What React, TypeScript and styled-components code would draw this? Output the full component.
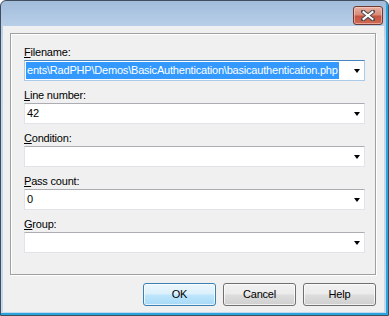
import React from "react";
import styled, { createGlobalStyle } from "styled-components";

type FieldSpec = {
  label: string;
  value?: string;
  focused?: boolean;
};

const fields: FieldSpec[] = [
  {
    label: "Filename:",
    value: "ents\\RadPHP\\Demos\\BasicAuthentication\\basicauthentication.php",
    focused: true,
  },
  { label: "Line number:", value: "42" },
  { label: "Condition:" },
  { label: "Pass count:", value: "0" },
  { label: "Group:" },
];

export default function App() {
  return (
    <>
      <GlobalStyle />
      <Window>
        <TitleBar>
          <CloseButton aria-label="Close">
            <svg width="14" height="11" viewBox="0 0 14 11">
              <path
                d="M2 1.5 L12 9.5 M12 1.5 L2 9.5"
                stroke="#4a4a4a"
                strokeWidth="4"
                strokeLinecap="square"
              />
              <path
                d="M2.5 2 L11.5 9 M11.5 2 L2.5 9"
                stroke="#ffffff"
                strokeWidth="2"
                strokeLinecap="square"
              />
            </svg>
          </CloseButton>
        </TitleBar>
        <Client>
          <GroupBox>
            {fields.map((f) => (
              <Row key={f.label}>
                <Label>
                  <u>{f.label[0]}</u>
                  {f.label.slice(1)}
                </Label>
                <Combo $focused={f.focused}>
                  <ComboText>
                    {f.value && (
                      <Value $selected={f.focused}>{f.value}</Value>
                    )}
                  </ComboText>
                  <Arrow />
                </Combo>
              </Row>
            ))}
          </GroupBox>
          <ButtonBar>
            <Button $default>OK</Button>
            <Button>Cancel</Button>
            <Button>Help</Button>
          </ButtonBar>
        </Client>
      </Window>
    </>
  );
}

const GlobalStyle = createGlobalStyle`
  html, body {
    margin: 0;
    padding: 0;
    background: #ffffff;
  }
  body {
    font-family: "Liberation Sans", Arial, sans-serif;
    font-size: 11px;
    letter-spacing: -0.2px;
    color: #000;
  }
`;

const Window = styled.div`
  box-sizing: border-box;
  width: 389px;
  height: 316px;
  border: 1px solid #3f4d5d;
  border-radius: 6px 6px 0 0;
  background: linear-gradient(to bottom, #a2bcdb 0px, #b8cfe9 25px, #c2d7ee 40px, #c4d8ee 100%);
  box-shadow: inset -2px -2px 0 #2aa5dc;
  display: flex;
  flex-direction: column;
`;

const TitleBar = styled.div`
  height: 25px;
  box-sizing: border-box;
  padding: 5px 5px 0 0;
  display: flex;
  justify-content: flex-end;
  align-items: flex-start;
`;

const CloseButton = styled.div`
  box-sizing: border-box;
  width: 30px;
  height: 19px;
  border: 1px solid #6e3b33;
  border-radius: 3px;
  background: linear-gradient(to bottom, #eab0a3 0%, #d98a78 45%, #c5533f 55%, #cf6b56 100%);
  box-shadow: inset 0 0 0 1px rgba(255, 220, 210, 0.5);
  display: flex;
  align-items: center;
  justify-content: center;
`;

const Client = styled.div`
  flex: 1;
  margin: 0 4px 3px 2px;
  background: #f0f0f0;
  padding: 7px 8px 0 7px;
  display: flex;
  flex-direction: column;
`;

const GroupBox = styled.div`
  box-sizing: border-box;
  height: 242px;
  border: 1px solid #a0a0a0;
  box-shadow: 1px 1px 0 #ffffff, inset 1px 1px 0 #ffffff;
  padding: 12px 10px 0 13px;
  display: flex;
  flex-direction: column;
  gap: 8px;
`;

const Row = styled.div`
  display: flex;
  flex-direction: column;
  gap: 1px;
`;

const Label = styled.div`
  height: 13px;
  line-height: 13px;
  white-space: nowrap;

  u {
    text-decoration: underline;
    text-underline-offset: 1px;
  }
`;

const Combo = styled.div<{ $focused?: boolean }>`
  box-sizing: border-box;
  height: 21px;
  background: #ffffff;
  border: 1px solid ${(p) => (p.$focused ? "#a9cbe8" : "#e2e3ea")};
  border-top-color: ${(p) => (p.$focused ? "#4585c0" : "#abadb3")};
  display: flex;
  align-items: center;
  padding: 0 4px 0 1px;
`;

const ComboText = styled.div`
  flex: 1;
  min-width: 0;
  display: flex;
  align-items: center;
  height: 17px;
`;

const Value = styled.span<{ $selected?: boolean }>`
  white-space: nowrap;
  line-height: 17px;
  padding: 0 1px 0 1px;
  background: ${(p) => (p.$selected ? "#3399ff" : "transparent")};
  color: ${(p) => (p.$selected ? "#ffffff" : "#000000")};
`;

const Arrow = styled.div`
  width: 0;
  height: 0;
  margin-left: 8px;
  border-left: 3.5px solid transparent;
  border-right: 3.5px solid transparent;
  border-top: 4px solid #000000;
`;

const ButtonBar = styled.div`
  display: flex;
  justify-content: flex-end;
  gap: 7px;
  padding-top: 8px;
`;

const Button = styled.div<{ $default?: boolean }>`
  box-sizing: border-box;
  width: 73px;
  height: 23px;
  border-radius: 3px;
  border: 1px solid ${(p) => (p.$default ? "#3c7fb1" : "#707070")};
  background: ${(p) =>
    p.$default
      ? "linear-gradient(to bottom, #ecf7fd 0%, #dbf0fc 48%, #bee6fd 52%, #a7d9f5 100%)"
      : "linear-gradient(to bottom, #f2f2f2 0%, #ebebeb 48%, #dddddd 52%, #cfcfcf 100%)"};
  box-shadow: inset 0 0 0 1px rgba(255, 255, 255, 0.7);
  display: flex;
  align-items: center;
  justify-content: center;
  line-height: 13px;
`;
